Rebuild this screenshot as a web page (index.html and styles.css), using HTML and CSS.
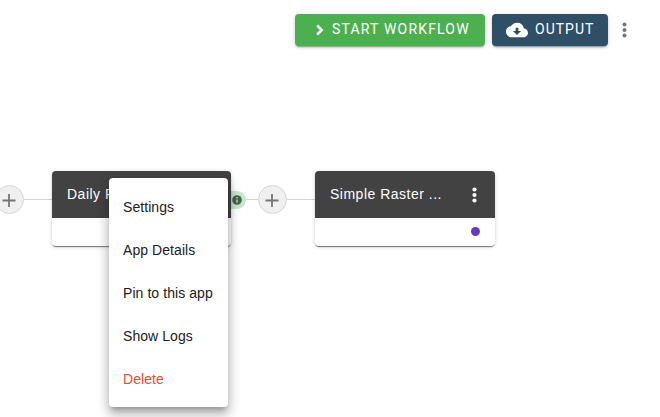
FILE: index.html
```html
<!DOCTYPE html>
<html lang="en">
<head>
<meta charset="utf-8">
<title>Workflow</title>
<link rel="stylesheet" href="styles.css">
</head>
<body>
<header class="toolbar">
  <button class="btn btn-start">
    <svg class="chevron" width="8" height="12" viewBox="0 0 8 12"><path d="M1.2 1.5 5.7 6 1.2 10.5" fill="none" stroke="currentColor" stroke-width="2.5"/></svg>
    <span>START WORKFLOW</span>
  </button>
  <button class="btn btn-output">
    <svg class="cloud" width="22" height="22" viewBox="0 0 24 24"><path fill="currentColor" d="M19.35 10.04A7.49 7.49 0 0 0 12 4C9.11 4 6.6 5.64 5.35 8.04A5.994 5.994 0 0 0 0 14c0 3.31 2.69 6 6 6h13c2.76 0 5-2.24 5-5 0-2.64-2.05-4.78-4.65-4.96zM16.5 13 12 17.5 7.5 13h3V9.5h3V13z"/></svg>
    <span>OUTPUT</span>
  </button>
  <svg class="more" width="5" height="16" viewBox="0 0 5 16"><g fill="currentColor"><circle cx="2.5" cy="2.5" r="2"/><circle cx="2.5" cy="8" r="2"/><circle cx="2.5" cy="13.5" r="2"/></g></svg>
</header>
<main class="flow">
  <span class="add"><svg width="15" height="15" viewBox="0 0 15 15"><path d="M7 1v13M.5 7.5h13" stroke="currentColor" stroke-width="1.8"/></svg></span>
  <span class="link"></span>
  <section class="node">
    <div class="node-head"><span>Daily Raster ...</span></div>
    <div class="node-body"></div>
    <nav class="menu">
      <a>Settings</a>
      <a>App Details</a>
      <a>Pin to this app</a>
      <a>Show Logs</a>
      <a class="danger">Delete</a>
    </nav>
  </section>
  <span class="info"><svg width="10" height="10" viewBox="0 0 10 10"><circle cx="5" cy="5" r="4.8" fill="#47624b"/><path d="M5 2v1.4M5 4.4v3.3" stroke="#c8e6c9" stroke-width="1.3"/></svg></span>
  <span class="link link-short"></span>
  <span class="add"><svg width="15" height="15" viewBox="0 0 15 15"><path d="M7 1v13M.5 7.5h13" stroke="currentColor" stroke-width="1.8"/></svg></span>
  <span class="link"></span>
  <section class="node node-last">
    <div class="node-head"><span>Simple Raster ...</span>
      <svg width="5" height="16" viewBox="0 0 5 16"><g fill="currentColor"><circle cx="2.5" cy="2.5" r="2.1"/><circle cx="2.5" cy="8" r="2.1"/><circle cx="2.5" cy="13.5" r="2.1"/></g></svg>
    </div>
    <div class="node-body"><span class="dot"></span></div>
  </section>
</main>
</body>
</html>
```
FILE: styles.css
```css
* { box-sizing: border-box; }
body {
  margin: 0;
  height: 417px;
  overflow: hidden;
  background: #fff;
  font-family: "Liberation Sans", Arial, sans-serif;
  font-size: 14px;
}
svg { display: block; flex: none; }
.toolbar {
  display: flex;
  align-items: center;
  height: 32px;
  margin: 14px 0 0 295px;
}
.btn {
  display: flex;
  align-items: center;
  height: 32px;
  padding: 0;
  border: 0;
  border-radius: 4px;
  color: #fff;
  font: 400 14px/30px Roboto, sans-serif;
  letter-spacing: 1.18px;
  white-space: nowrap;
  box-shadow: 0 2px 2px -1px rgba(0, 0, 0, .4), 0 1px 4px rgba(0, 0, 0, .16);
}
.btn span { height: 32px; }
.btn-start { width: 190px; padding-left: 21px; background: #4caf50; }
.btn-output { width: 116px; margin-left: 7px; padding-left: 14px; background: #2f4f66; letter-spacing: 1px; }
.chevron { margin-right: 8px; }
.cloud { margin-right: 7px; }
.more { margin-left: 14px; color: #757575; }
.flow {
  display: flex;
  align-items: flex-start;
  margin: 125px 0 0 -5px;
}
.add {
  display: flex;
  align-items: center;
  justify-content: center;
  flex: none;
  width: 29px;
  height: 29px;
  margin-top: 14px;
  padding-top: 2px;
  border: 1px solid #d6d6d6;
  border-radius: 50%;
  background: #f0f0f0;
  color: #757575;
}
.link { flex: none; width: 28px; height: 1px; margin-top: 28px; background: #d3d3d3; }
.link-short { width: 12px; }
.node {
  position: relative;
  flex: none;
  width: 179px;
  height: 75px;
  border-radius: 4px;
  background: #fff;
  box-shadow: 0 2px 1px -1px rgba(0, 0, 0, .35), 0 1px 1px rgba(0, 0, 0, .2), 0 1px 4px rgba(0, 0, 0, .16);
}
.node-last { width: 180px; }
.node-head {
  display: flex;
  align-items: center;
  justify-content: space-between;
  height: 47px;
  padding: 0 18px 0 15px;
  border-radius: 4px 4px 0 0;
  background: #424242;
  color: #fff;
  letter-spacing: .5px;
}
.node-head span { padding-bottom: 2px; }
.node-body { display: flex; align-items: center; justify-content: flex-end; height: 27px; padding-right: 15px; }
.dot { width: 9px; height: 9px; border-radius: 50%; background: #673ab7; }
.info {
  display: flex;
  align-items: center;
  flex: none;
  width: 15px;
  height: 18px;
  margin-top: 20px;
  border-radius: 0 9px 9px 0;
  background: #c8e6c9;
}
.info svg { margin-left: 1px; }
.menu {
  position: absolute;
  z-index: 2;
  left: 57px;
  top: 7px;
  width: 119px;
  height: 229px;
  padding: 8px 14px 6px;
  border-radius: 4px;
  background: #fff;
  box-shadow: 0 5px 5px -3px rgba(0, 0, 0, .25), 0 8px 10px 1px rgba(0, 0, 0, .16), 0 3px 14px 2px rgba(0, 0, 0, .14);
}
.menu a { display: block; color: #212121; line-height: 43px; letter-spacing: .07px; white-space: nowrap; }
.menu .danger { color: #f44336; }
```
